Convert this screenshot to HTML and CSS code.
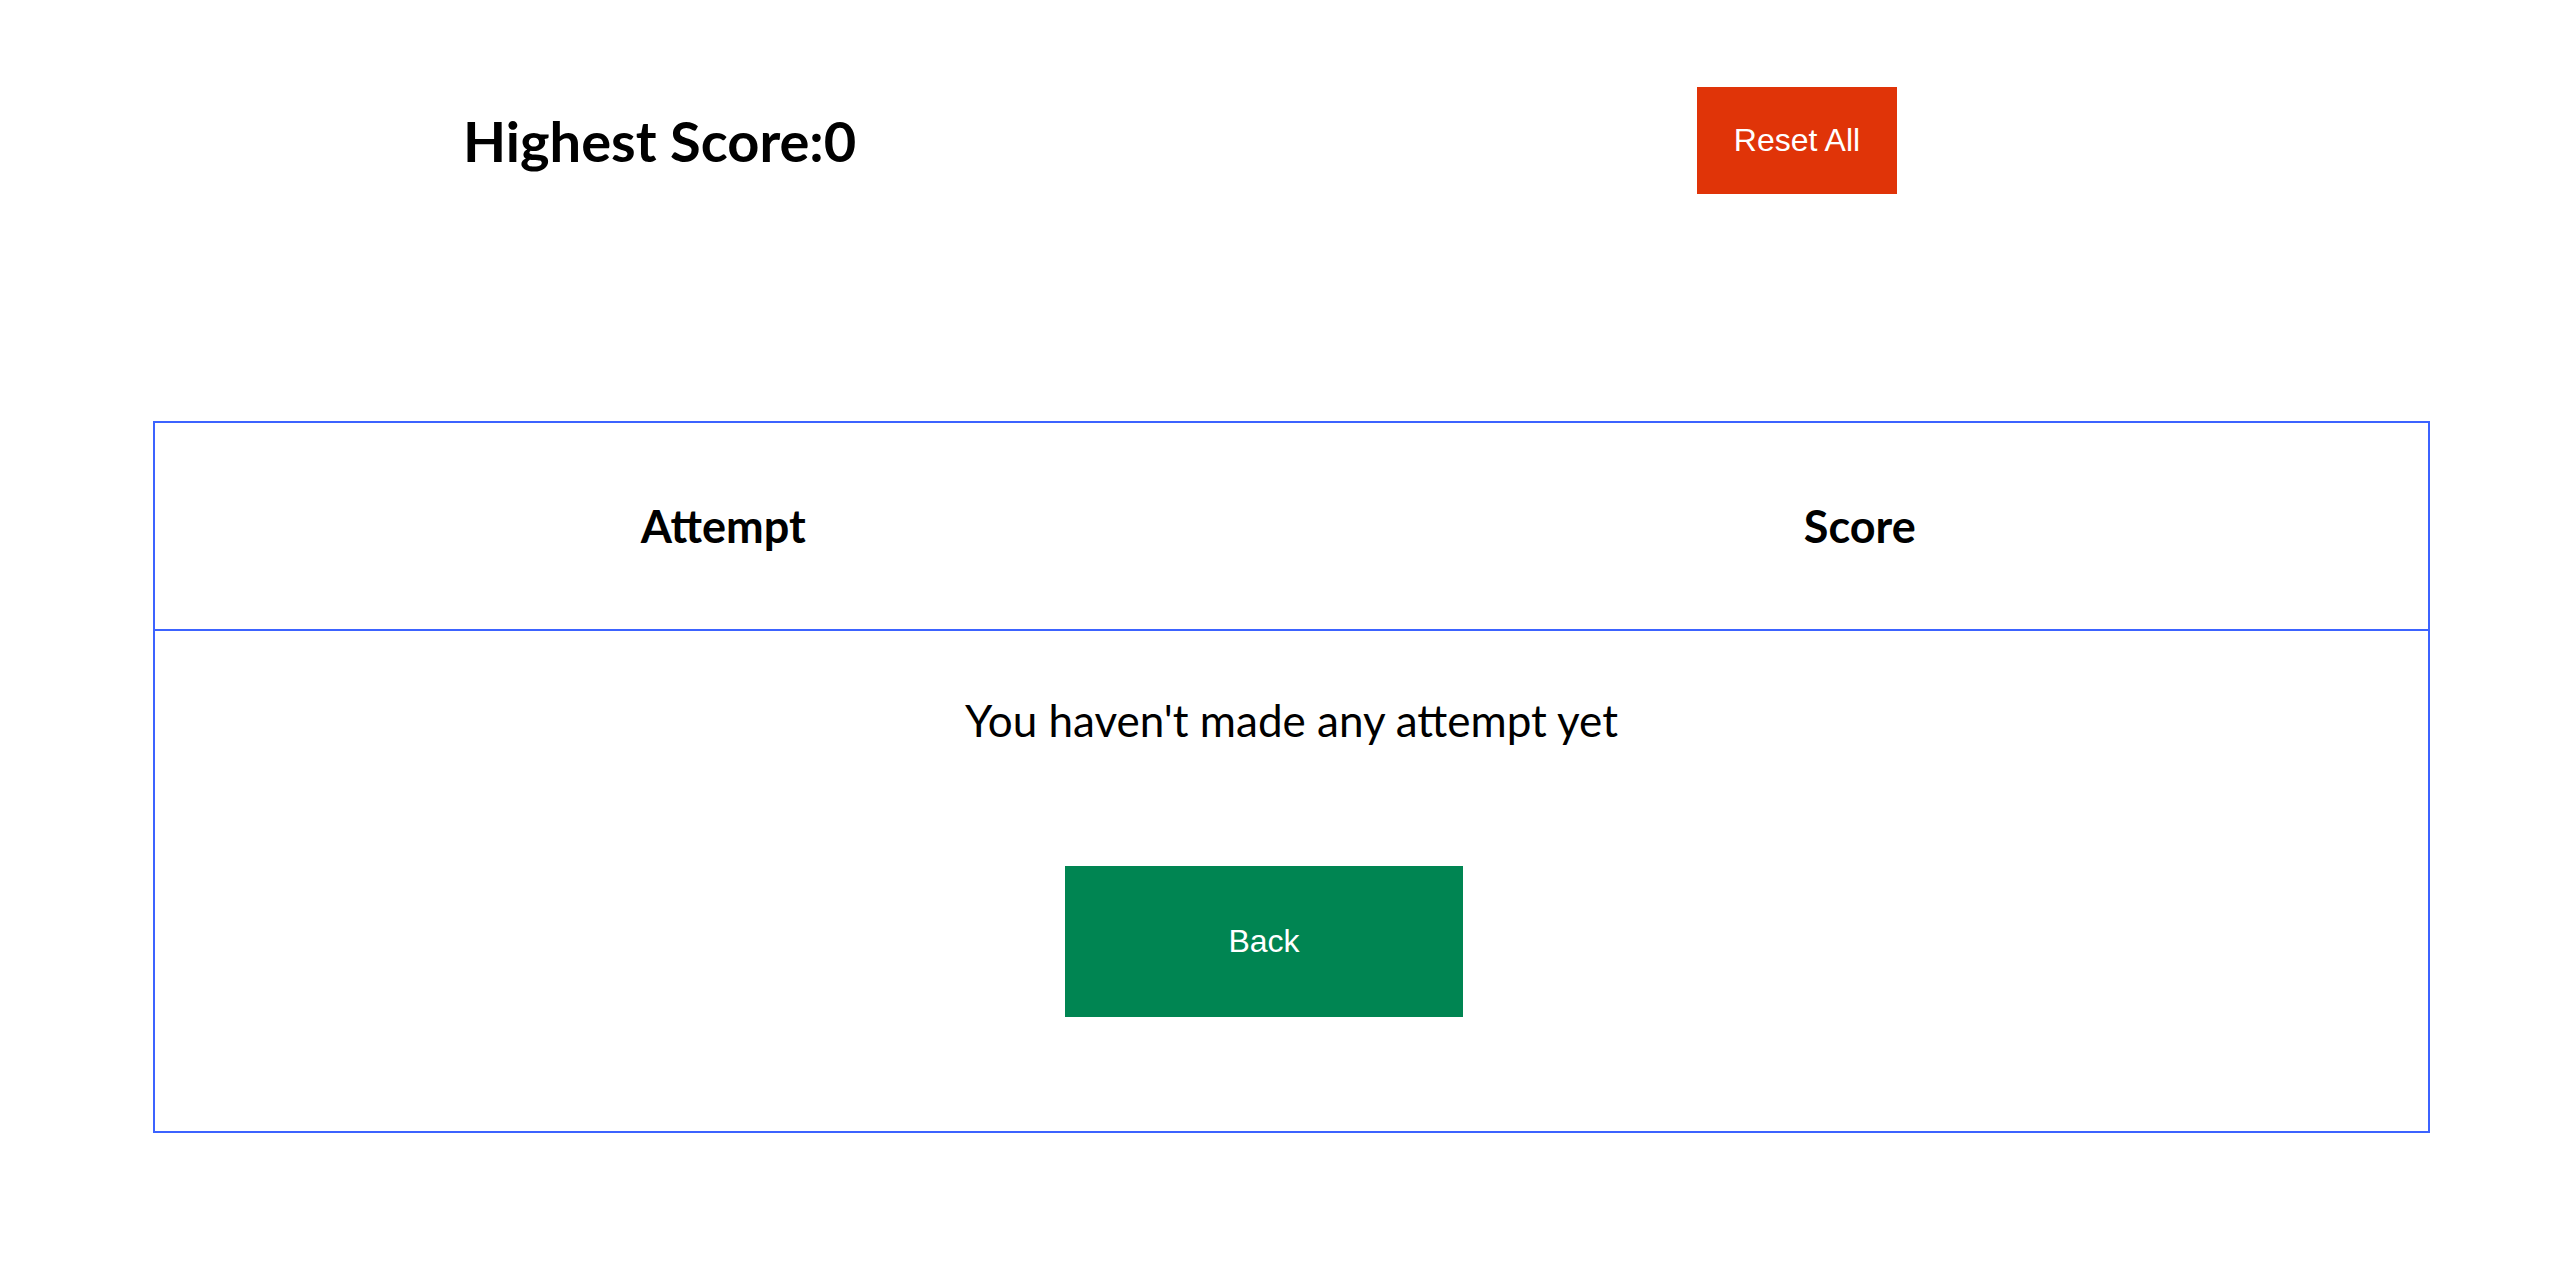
FILE: index.html
```html
<!DOCTYPE html>
<html lang="en">
<head>
<meta charset="utf-8">
<title>Scores</title>
<link rel="stylesheet" href="styles.css">
</head>
<body>
<div class="top">
  <h1 class="highest">Highest Score:0</h1>
  <button class="btn reset">Reset All</button>
</div>
<div class="board">
  <div class="head">
    <div class="col">Attempt</div>
    <div class="col">Score</div>
  </div>
  <div class="body">
    <p class="empty">You haven't made any attempt yet</p>
    <button class="btn back">Back</button>
  </div>
</div>
</body>
</html>
```
FILE: styles.css
```css
html, body {
  margin: 0;
  padding: 0;
  background: #fff;
}
body {
  font-family: Lato, "Noto Sans", sans-serif;
  color: #000;
}
.top {
  display: flex;
  align-items: center;
  padding: 87px 0 0 463px;
}
.highest {
  flex: 0 0 1234px;
  margin: 0;
  font-size: 56px;
  font-weight: 700;
  line-height: 1;
  white-space: nowrap;
}
.btn {
  border: none;
  color: #fff;
  font-family: "Liberation Sans", Arial, sans-serif;
  font-size: 32px;
  padding: 0;
  cursor: pointer;
}
.reset {
  width: 200px;
  height: 107px;
  background: #e03408;
}
.board {
  margin: 227px 0 0 153px;
  width: 2277px;
  box-sizing: border-box;
  border: 2px solid #3c63ff;
}
.head {
  display: grid;
  grid-template-columns: 1fr 1fr;
  height: 208px;
  box-sizing: border-box;
  border-bottom: 2px solid #3c63ff;
  align-items: center;
}
.col {
  text-align: center;
  font-size: 45px;
  font-weight: 700;
  line-height: 1;
}
.body {
  display: flex;
  flex-direction: column;
  align-items: center;
  padding: 67px 0 114px;
}
.empty {
  margin: 0 0 124px;
  font-size: 44px;
  line-height: 1;
}
.back {
  width: 398px;
  height: 151px;
  margin-right: 55px;
  background: #008552;
}
```
